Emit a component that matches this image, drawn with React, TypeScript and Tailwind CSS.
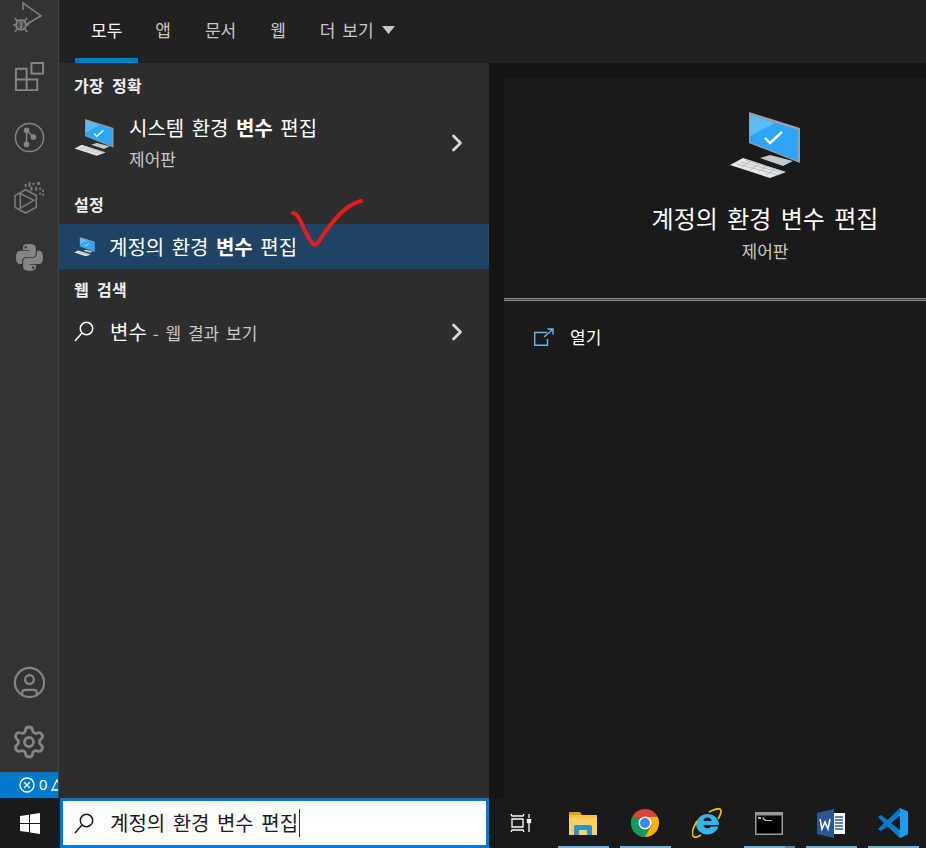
import React from 'react';
import { ChevronRight, CircleUser, Settings } from 'lucide-react';
import { FaPython } from 'react-icons/fa';

const KR = "font-['Noto_Sans_CJK_KR','Noto_Sans',sans-serif]";

function PcIcon({ className }: { className?: string }) {
  return (
    <svg viewBox="0 0 72 68" className={className}>
      <polygon points="20,0 71,16 71,51 20,31" fill="#9aa0a6" />
      <polygon points="21,3 69,18 69,49 21,30" fill="#2ea6f5" />
      <polygon points="21,3 46,11 21,24" fill="#5cbcf8" />
      <polygon points="31,46 41,43 64,49 54,54" fill="#c3c9cc" />
      <polygon points="1,53 14,46 57,60 41,66" fill="#e6e8ea" />
      <path d="M8 52l42 11M12 50l42 11M16 48l40 12M22 49l-9 6M30 52l-9 6M38 54l-9 6M46 57l-9 6" stroke="#a9afb3" strokeWidth="0.7" fill="none" />
      <path d="M36 26l5 5 12-11" fill="none" stroke="#fff" strokeWidth="2.4" />
    </svg>
  );
}

function SearchGlyph({ color }: { color: string }) {
  return (
    <svg viewBox="0 0 20 21" className="w-5 h-[21px]" fill="none" stroke={color} strokeWidth="1.5">
      <circle cx="12.5" cy="7.5" r="6.2" />
      <path d="M8 12L1 20" />
    </svg>
  );
}

function DebugIcon() {
  return (
    <svg viewBox="0 0 32 32" className="w-8 h-8" fill="none" stroke="#858585" strokeWidth="1.5">
      <path d="M10 9V2l18 13-14 8" />
      <circle cx="8" cy="24" r="5" fill="#858585" fillOpacity="0.35" />
      <path d="M4 19.500h8M8 21v8M3 24H0M16 24h-3M4 28l-2 3M12 28l2 3M4 20l-2-3M12 20l2-3" />
    </svg>
  );
}

function ExtensionsIcon() {
  return (
    <svg viewBox="0 0 32 32" className="w-[31px] h-[31px]" fill="none" stroke="#858585" strokeWidth="2">
      <path d="M2 7h11v22H2zM2 18h22v11H13" />
      <rect x="18" y="1" width="12" height="11" />
    </svg>
  );
}

function GitIcon() {
  return (
    <svg viewBox="0 0 32 32" className="w-[31px] h-[31px]" fill="none" stroke="#858585" strokeWidth="1.5">
      <circle cx="16" cy="16" r="14.5" />
      <circle cx="13" cy="8.500" r="2.2" fill="#858585" />
      <circle cx="13" cy="23" r="2.2" fill="#858585" />
      <circle cx="20" cy="15.500" r="2.2" fill="#858585" />
      <path d="M13 8.500V23M13 8.500l7 7" />
    </svg>
  );
}

function BoxIcon() {
  return (
    <svg viewBox="0 0 32 34" className="w-[31px] h-[33px]" fill="none" stroke="#7c7c7c" strokeWidth="1.6">
      <path d="M1 15l11-6 11 6v12l-11 6-11-6z" />
      <path d="M6.500 13v15l14-8z" />
      <g fill="#7c7c7c" stroke="none">
        <rect x="11" y="3" width="2" height="3" />
        <rect x="15" y="1" width="2" height="5" />
        <rect x="19" y="2" width="2" height="2" />
        <rect x="24" y="1" width="3" height="3" />
        <rect x="17" y="6" width="2" height="4" />
        <rect x="22" y="6" width="2" height="4" />
        <rect x="26" y="7" width="2" height="2" />
        <rect x="29" y="9" width="2" height="2" />
        <rect x="26" y="12" width="2" height="2" />
        <rect x="29" y="13" width="2" height="2" />
      </g>
    </svg>
  );
}

function ChromeIcon() {
  return (
    <svg viewBox="0 0 28 28" className="w-7 h-7">
      <circle cx="14" cy="14" r="14" fill="#db4437" />
      <path d="M14 14L1.900 7A14 14 0 0 0 14 28l6.900-12z" fill="#0f9d58" />
      <path d="M14 8h12.600A14 14 0 0 1 14 28l6.900-12z" fill="#f4b400" />
      <circle cx="14" cy="14" r="6.500" fill="#fff" />
      <circle cx="14" cy="14" r="5" fill="#4285f4" />
    </svg>
  );
}

function IeIcon() {
  return (
    <svg viewBox="0 0 30 30" className="w-[30px] h-[30px]" fill="none">
      <path d="M4 17a11.500 11 0 1 1 23 0H11.500a4 3.500 0 0 0 7.500 1.500h7.500A11.500 11 0 0 1 4 17zM11.500 13h8a4 3.500 0 0 0-8 0z" fill="#38b5e8" fillRule="evenodd" />
      <path d="M17 4C22 1 27 0 28.500 1.500 30 3 28 8 26 11M5 13C1 20-0.500 26 1 28c1.500 2 5 1 8-1" stroke="#f2c200" strokeWidth="1.7" />
    </svg>
  );
}

function CmdIcon() {
  return (
    <svg viewBox="0 0 28 23" className="w-7 h-[23px]">
      <rect x="0.750" y="0.750" width="26.500" height="21.500" fill="#000" stroke="#9a9a9a" strokeWidth="1.5" />
      <rect x="1" y="1" width="26" height="2.500" fill="#9a9a9a" />
      <path d="M3 5h3v2H3zM8 5l3 3h6v1H10L7 6z" fill="#b8b8b8" />
    </svg>
  );
}

function WordIcon() {
  return (
    <svg viewBox="0 0 28 29" className="w-7 h-[29px]">
      <rect x="15" y="4" width="13" height="21" fill="#fff" />
      <path d="M18 8h8M18 11h8M18 14h8M18 17h8M18 20h8" stroke="#2b5797" strokeWidth="1.5" />
      <polygon points="0,4 17,0 17,29 0,25" fill="#2b5797" />
      <path d="M3 10l2 10 3-7 3 7 2-10" fill="none" stroke="#fff" strokeWidth="1.6" />
    </svg>
  );
}

function VscodeIcon() {
  return (
    <svg viewBox="0 0 30 30" className="w-[30px] h-[30px]">
      <path d="M22 0l8 3.500v23L22 30 7 16l15-12z" fill="#1f9cf0" />
      <path d="M22 0L9.500 12 3 7 0 9l6 6-6 6 3 2 6.500-5L22 30l-1-7v-16z" fill="#0a7bc8" />
      <path d="M22 8l-9 7 9 7z" fill="#1a1a1a" />
    </svg>
  );
}

function ExplorerIcon() {
  return (
    <svg viewBox="0 0 28 23" className="w-7 h-[23px]">
      <path d="M0 1a1 1 0 0 1 1-1h10l2 3H0z" fill="#d9a21b" />
      <rect x="0" y="3" width="28" height="20" fill="#fbd25c" />
      <path d="M0 3h28v3H0z" fill="#f5c242" />
      <path d="M5 23v-8a2 2 0 0 1 2-2h14a2 2 0 0 1 2 2v8h-5v-5h-8v5z" fill="#2d8fd9" />
    </svg>
  );
}

function TaskbarApp({ children, active = true, extra = false }: { children: React.ReactNode; active?: boolean; extra?: boolean }) {
  return (
    <div className="relative w-[62px] h-full flex items-center justify-center">
      {children}
      {active && (
        <div className="absolute bottom-0 left-[6px] w-[51px] h-[2px] bg-[#69b4ea] flex justify-end">
          {extra && <div className="w-[10px] h-full bg-[#4f88b4]" />}
        </div>
      )}
    </div>
  );
}

function SectionLabel({ children }: { children: React.ReactNode }) {
  return <div className="text-[16px] font-bold text-[#f0f0f0] leading-[15px] tracking-[0.3px] [word-spacing:4px] pl-[15px]">{children}</div>;
}

export default function App() {
  return (
    <div className={`relative w-[926px] h-[848px] overflow-hidden flex flex-col bg-[#1a1a1a] ${KR}`}>
      {/* red pen check on top of the screenshot */}
      <svg className="absolute left-0 top-0 w-[926px] h-[300px] pointer-events-none z-10" viewBox="0 0 926 300" fill="none">
        <path d="M293 213c3 0 5 3 8 9 3 7 7 16 12 22 3 2 6-2 8-6 6-9 12-17 20-25 6-6 13-10 20-12" stroke="#e81c1c" strokeWidth="4" strokeLinecap="round" />
      </svg>

      <div className="flex h-[798px]">
        {/* vscode activity bar behind the search popup */}
        <div className="w-[59px] shrink-0 flex flex-col justify-between bg-[#333333] border-r border-[#444444]">
          <div className="flex flex-col -mt-[13px]">
            <div className="h-[60px] flex items-center justify-center"><DebugIcon /></div>
            <div className="h-[60px] flex items-center justify-center"><ExtensionsIcon /></div>
            <div className="h-[60px] flex items-center justify-center"><GitIcon /></div>
            <div className="h-[60px] flex items-center justify-center"><BoxIcon /></div>
            <div className="h-[60px] flex items-center justify-center"><FaPython className="w-[31px] h-[31px] text-[#858585]" /></div>
          </div>
          <div className="flex flex-col">
            <div className="h-[60px] flex items-center justify-center"><CircleUser className="w-[35px] h-[35px] text-[#858585]" strokeWidth={1.5} /></div>
            <div className="h-[60px] flex items-center justify-center"><Settings className="w-[36px] h-[36px] text-[#858585]" strokeWidth={1.9} /></div>
            <div className="h-[26px] bg-[#007acc] flex items-center gap-[4px] pl-[19px] overflow-hidden text-white text-[15px] font-['Liberation_Sans',sans-serif]">
              <svg viewBox="0 0 16 16" className="w-4 h-4 shrink-0" fill="none" stroke="#fff" strokeWidth="1.3">
                <circle cx="8" cy="8" r="7" />
                <path d="M5.200 5.200l5.600 5.600M10.800 5.200l-5.600 5.600" />
              </svg>
              <span>0</span>
              <svg viewBox="0 0 12 14" className="w-3 h-[14px] shrink-0" fill="none" stroke="#fff" strokeWidth="1.3">
                <path d="M6 2l5 10H1z" />
              </svg>
            </div>
          </div>
        </div>

        <div className="flex-1 flex flex-col min-w-0">
          {/* tabs */}
          <div className="h-[63px] shrink-0 bg-[#212121] flex items-stretch pl-[16px] text-[17px] text-[#c8c8c8]">
            <div className="px-[16px] flex items-center text-white border-b-[5px] border-[#0078d4] pt-[1px]">모두</div>
            <div className="px-[17px] flex items-center pb-[3px]">앱</div>
            <div className="px-[17px] flex items-center pb-[3px]">문서</div>
            <div className="px-[17px] flex items-center pb-[3px]">웹</div>
            <div className="px-[17px] flex items-center gap-[8px] [word-spacing:3px] pb-[3px]">
              더 보기
              <svg viewBox="0 0 13 8" className="w-[13px] h-2"><path d="M0 0h13L6.500 8z" fill="#c8c8c8" /></svg>
            </div>
          </div>

          <div className="flex-1 flex min-h-0">
            {/* result list */}
            <div className="w-[430px] shrink-0 bg-[#2d2d2d] flex flex-col pt-[15px]">
              <SectionLabel>가장 정확</SectionLabel>
              <div className="h-[100px] flex items-center pl-[15px] pr-[18px] text-white">
                <PcIcon className="w-[40px] h-[38px] mr-[15px] mb-[10px]" />
                <div className="flex-1 flex flex-col gap-[8px]">
                  <div className="text-[20px] leading-[24px] [word-spacing:3px]">시스템 환경 <b>변수</b> 편집</div>
                  <div className="text-[17px] leading-[22px] text-[#c8c8c8]">제어판</div>
                </div>
                <ChevronRight className="w-[28px] h-[28px] text-[#d8d8d8]" strokeWidth={2.4} />
              </div>
              <div className="h-[4px]" />
              <SectionLabel>설정</SectionLabel>
              <div className="h-[45px] mt-[12px] bg-[#1f4363] flex items-center pl-[15px] text-white">
                <PcIcon className="w-[21px] h-[20px] mr-[14px]" />
                <div className="text-[20px] [word-spacing:3px]">계정의 환경 <b>변수</b> 편집</div>
              </div>
              <div className="h-[13px]" />
              <SectionLabel>웹 검색</SectionLabel>
              <div className="h-[45px] mt-[12px] flex items-center pl-[15px] pr-[18px] text-white">
                <div className="mr-[16px]"><SearchGlyph color="#ffffff" /></div>
                <div className="flex-1 flex items-baseline gap-[6px]">
                  <span className="text-[20px]">변수</span>
                  <span className="text-[17px] text-[#c8c8c8] [word-spacing:3px]">- 웹 결과 보기</span>
                </div>
                <ChevronRight className="w-[28px] h-[28px] text-[#d8d8d8]" strokeWidth={2.4} />
              </div>
            </div>

            {/* preview pane */}
            <div className="flex-1 bg-[#141413] pl-[15px] pt-[16px] overflow-hidden">
              <div className="w-[522px] h-full bg-[#1a1a1a] flex flex-col">
                <div className="flex flex-col items-center pt-[33px]">
                  <PcIcon className="w-[72px] h-[68px]" />
                  <div className="mt-[22px] text-[24px] leading-[32px] text-white [word-spacing:4px]">계정의 환경 변수 편집</div>
                  <div className="mt-[5px] text-[17px] leading-[24px] text-[#c8c8c8]">제어판</div>
                </div>
                <div className="mt-[35px] h-[3px] border-y border-[#8f8f8f] bg-[#444444]" />
                <div className="mt-[23px] flex items-center pl-[30px] text-[17px] text-white">
                  <svg viewBox="0 0 20 18" className="w-5 h-[18px] mr-[16px]" fill="none" stroke="#6bb6ec" strokeWidth="1.4">
                    <path d="M13 4.500H0.700v12.800h12.800V11" />
                    <path d="M10 9l8-7M13.500 1h5.500v5.500" />
                  </svg>
                  열기
                </div>
              </div>
            </div>
          </div>
        </div>
      </div>

      {/* windows taskbar */}
      <div className="h-[50px] flex bg-[#1a1a1a]">
        <div className="w-[60px] flex items-center justify-center">
          <svg viewBox="0 0 20 21" className="w-5 h-[21px]" fill="#fff">
            <path d="M0 3l9-1.300V10H0zM10 1.500L20 0v10H10zM0 11h9v8.300L0 18zM10 11h10v10l-10-1.500z" />
          </svg>
        </div>
        <div className="w-[429px] bg-white border-[3px] border-[#0078d4] flex items-center pl-[11px] text-[#1a1a1a]">
          <div className="mr-[16px]"><SearchGlyph color="#1a1a1a" /></div>
          <span className="text-[20px] [word-spacing:3px]">계정의 환경 변수 편집</span>
          <div className="w-px h-[28px] bg-[#333333] ml-px" />
        </div>
        <div className="w-[63px] flex items-center justify-center">
          <svg viewBox="0 0 22 20" className="w-[22px] h-5" fill="none" stroke="#fff" strokeWidth="1.3">
            <path d="M1 1l1 2h11l1-2M2 6h11v8H2zM1 19l1-2h11l1 2M19 1v4M19 10v9" />
            <rect x="17.500" y="6.500" width="3" height="3" fill="#fff" />
          </svg>
        </div>
        <TaskbarApp><ExplorerIcon /></TaskbarApp>
        <TaskbarApp><ChromeIcon /></TaskbarApp>
        <TaskbarApp active={false}><IeIcon /></TaskbarApp>
        <TaskbarApp extra><CmdIcon /></TaskbarApp>
        <TaskbarApp><WordIcon /></TaskbarApp>
        <TaskbarApp><VscodeIcon /></TaskbarApp>
      </div>
    </div>
  );
}
